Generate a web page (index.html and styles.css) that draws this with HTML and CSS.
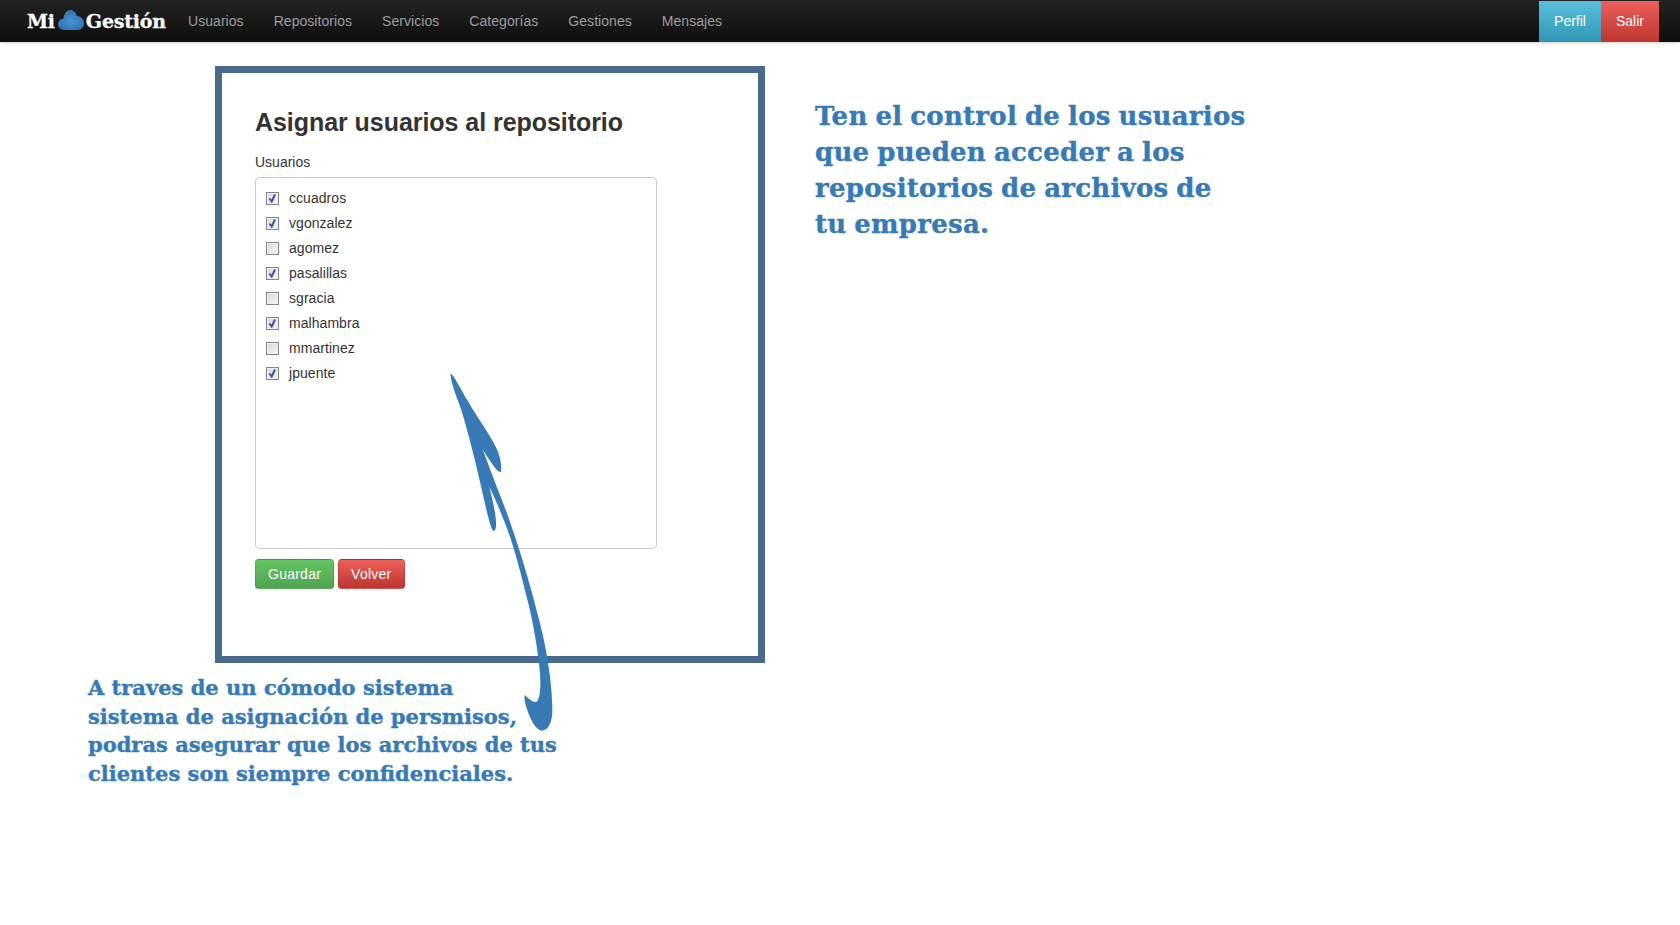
FILE: index.html
```html
<!doctype html>
<html lang="en">
  <head>
    <meta charset="utf-8">
    <title>Mi Gestión</title>
    <link rel="stylesheet" href="styles.css">
  </head>
  <body>
    <div class="navbar">
      <a class="brand" href="#">Mi<svg class="cloud" viewBox="0 0 26 20" width="26" height="20"><defs><radialGradient id="cloud-fill" cx="50%" cy="55%" r="60%"><stop offset="0" stop-color="#4a94d6"/><stop offset="1" stop-color="#2f6fa8"/></radialGradient></defs><path d="M6 20C2.500 20 0 17.500 0 14.300C0 11 2.500 8.800 5.500 8.800C6 4 8.500 0 12.500 0C15.800 0 18 2.500 18.800 6C22.800 6 26 9.500 26 13.300C26 17.500 23 20 19.500 20Z" fill="url(#cloud-fill)"/></svg>Gestión</a>
      <ul class="nav">
        <li><a href="#">Usuarios</a></li>
        <li><a href="#">Repositorios</a></li>
        <li><a href="#">Servicios</a></li>
        <li><a href="#">Categorías</a></li>
        <li><a href="#">Gestiones</a></li>
        <li><a href="#">Mensajes</a></li>
      </ul>
      <div class="nav-buttons">
        <a class="nav-btn nav-btn-info" href="#">Perfil</a>
        <a class="nav-btn nav-btn-danger" href="#">Salir</a>
      </div>
    </div>

    <div class="top-row">
      <div class="frame">
        <h3>Asignar usuarios al repositorio</h3>
        <form>
          <label class="field-label">Usuarios</label>
          <div class="user-list">
            <label class="user"><input type="checkbox" checked>ccuadros</label>
            <label class="user"><input type="checkbox" checked>vgonzalez</label>
            <label class="user"><input type="checkbox">agomez</label>
            <label class="user"><input type="checkbox" checked>pasalillas</label>
            <label class="user"><input type="checkbox">sgracia</label>
            <label class="user"><input type="checkbox" checked>malhambra</label>
            <label class="user"><input type="checkbox">mmartinez</label>
            <label class="user"><input type="checkbox" checked>jpuente</label>
          </div>
          <div class="actions">
            <button type="button" class="btn btn-success">Guardar</button>
            <button type="button" class="btn btn-danger">Volver</button>
          </div>
        </form>
      </div>
      <p class="callout">Ten el control de los usuarios<br>que pueden acceder a los<br>repositorios de archivos de<br>tu empresa.</p>
    </div>

    <p class="caption">A traves de un cómodo sistema<br>sistema de asignación de persmisos,<br>podras asegurar que los archivos de tus<br>clientes son siempre confidenciales.</p>

    <svg class="arrow" viewBox="0 0 480 1140" width="160" height="380">
      <path fill="#377ab6" d="M92 40C105 50 125 95 145 125C170 170 205 215 228 262C240 285 246 315 243 335C236 340 226 325 215 310C205 295 195 280 188 268C200 300 215 340 230 380C255 440 275 500 290 545C315 620 340 710 360 790C380 870 395 960 397 1040C398 1080 390 1110 365 1112C345 1110 330 1075 320 1045C315 1030 312 1015 314 1005C325 1015 340 1030 350 1025C362 1015 362 975 360 940C355 880 340 790 325 730C310 670 290 590 270 530C250 475 228 420 208 380C218 420 230 470 228 500C226 515 220 517 215 505C205 480 195 430 180 365C165 300 145 220 130 170C118 125 90 70 92 40Z"/>
    </svg>
  </body>
</html>
```

FILE: styles.css
```css
/* body tags */
body {
    margin: 0;
    min-height: 925px;
    background: #fff;
    color: #333;
    font-family: "Liberation Sans", Arial, sans-serif;
    font-size: 14px;
    line-height: 20px;
    position: relative;
    overflow: hidden;
}
a { text-decoration: none; }

/* navbar */
.navbar {
    display: flex;
    align-items: stretch;
    height: 42px;
    padding: 1px 21px 0 27px;
    box-sizing: border-box;
    background: linear-gradient(to bottom, #232323, #0e0e0e);
    box-shadow: 0 1px 3px rgba(0,0,0,0.2);
}
.brand {
    display: flex;
    align-items: center;
    width: 161px;
    padding-bottom: 1px;
    color: #fff;
    font-family: "DejaVu Serif", serif;
    font-size: 19px;
    font-weight: bold;
    letter-spacing: -0.2px;
    -webkit-text-stroke: 0.3px #fff;
}
.cloud { margin: -3px 2px 0 3px; flex: none; }
.nav {
    display: flex;
    gap: 30px;
    margin: 0;
    padding: 0 0 1px;
    list-style: none;
    align-items: center;
    letter-spacing: 0.05px;
}
.nav a { color: #9d9d9d; }
.nav-buttons {
    display: flex;
    margin-left: auto;
}
.nav-btn {
    display: flex;
    align-items: center;
    justify-content: center;
    padding-bottom: 1px;
    color: #fff;
}
.nav-btn-info {
    width: 62px;
    background: linear-gradient(to bottom, #5bc0de, #2f96b4);
}
.nav-btn-danger {
    width: 58px;
    background: linear-gradient(to bottom, #ee5f5b, #bd362f);
}

/* content */
.top-row {
    display: flex;
    align-items: flex-start;
    margin: 24px 0 0 215px;
}
.frame {
    width: 550px;
    height: 597px;
    padding: 33px 33px;
    box-sizing: border-box;
    border: 7px solid #4a6a8b;
    flex: none;
}
.frame h3 {
    margin: 0 0 14px;
    color: #333;
    font-size: 25px;
    font-weight: bold;
    line-height: 32px;
    letter-spacing: -0.05px;
}
.field-label {
    display: block;
    margin-bottom: 5px;
}
.user-list {
    width: 402px;
    height: 372px;
    padding: 7px 10px;
    box-sizing: border-box;
    border: 1px solid #ccc;
    border-radius: 4px;
}
.user {
    display: flex;
    align-items: center;
    height: 25px;
    letter-spacing: 0.05px;
}
.user input {
    appearance: none;
    -webkit-appearance: none;
    width: 13px;
    height: 13px;
    margin: 2px 10px 0 0;
    box-sizing: border-box;
    border: 1px solid #858585;
    background: linear-gradient(135deg, #d8d8d8, #f6f6f6);
    box-shadow: inset 0 0 0 1px #efefef;
}
.user input:checked {
    background: url("data:image/svg+xml,%3Csvg xmlns='http://www.w3.org/2000/svg' viewBox='0 0 11 11'%3E%3Cpath d='M2.500 5.500L4.700 8.500L8 1.500' fill='none' stroke='%233a55a5' stroke-width='2'/%3E%3C/svg%3E") center no-repeat, linear-gradient(135deg, #d8d8d8, #f6f6f6);
}
.actions {
    display: flex;
    gap: 4px;
    margin-top: 10px;
}
.btn {
    height: 30px;
    padding: 0 12px;
    border: 1px solid rgba(0,0,0,0.1);
    border-radius: 4px;
    color: #fff;
    font-family: inherit;
    font-size: 14px;
    letter-spacing: 0.25px;
}
.btn-success { background: linear-gradient(to bottom, #62c462, #51a351); }
.btn-danger { background: linear-gradient(to bottom, #ee5f5b, #bd362f); }

/* blue notes */
.callout, .caption {
    margin: 0;
    color: #377ab6;
    font-family: "DejaVu Serif", serif;
    font-weight: bold;
    -webkit-text-stroke: 0.4px #377ab6;
}
.callout {
    margin: 32px 0 0 50px;
    font-size: 26px;
    line-height: 36px;
    letter-spacing: 0.25px;
    word-spacing: -1.4px;
}
.caption {
    margin: 11px 0 0 88px;
    font-size: 21px;
    line-height: 28.6px;
}
.arrow {
    position: absolute;
    left: 420px;
    top: 360px;
}
```
